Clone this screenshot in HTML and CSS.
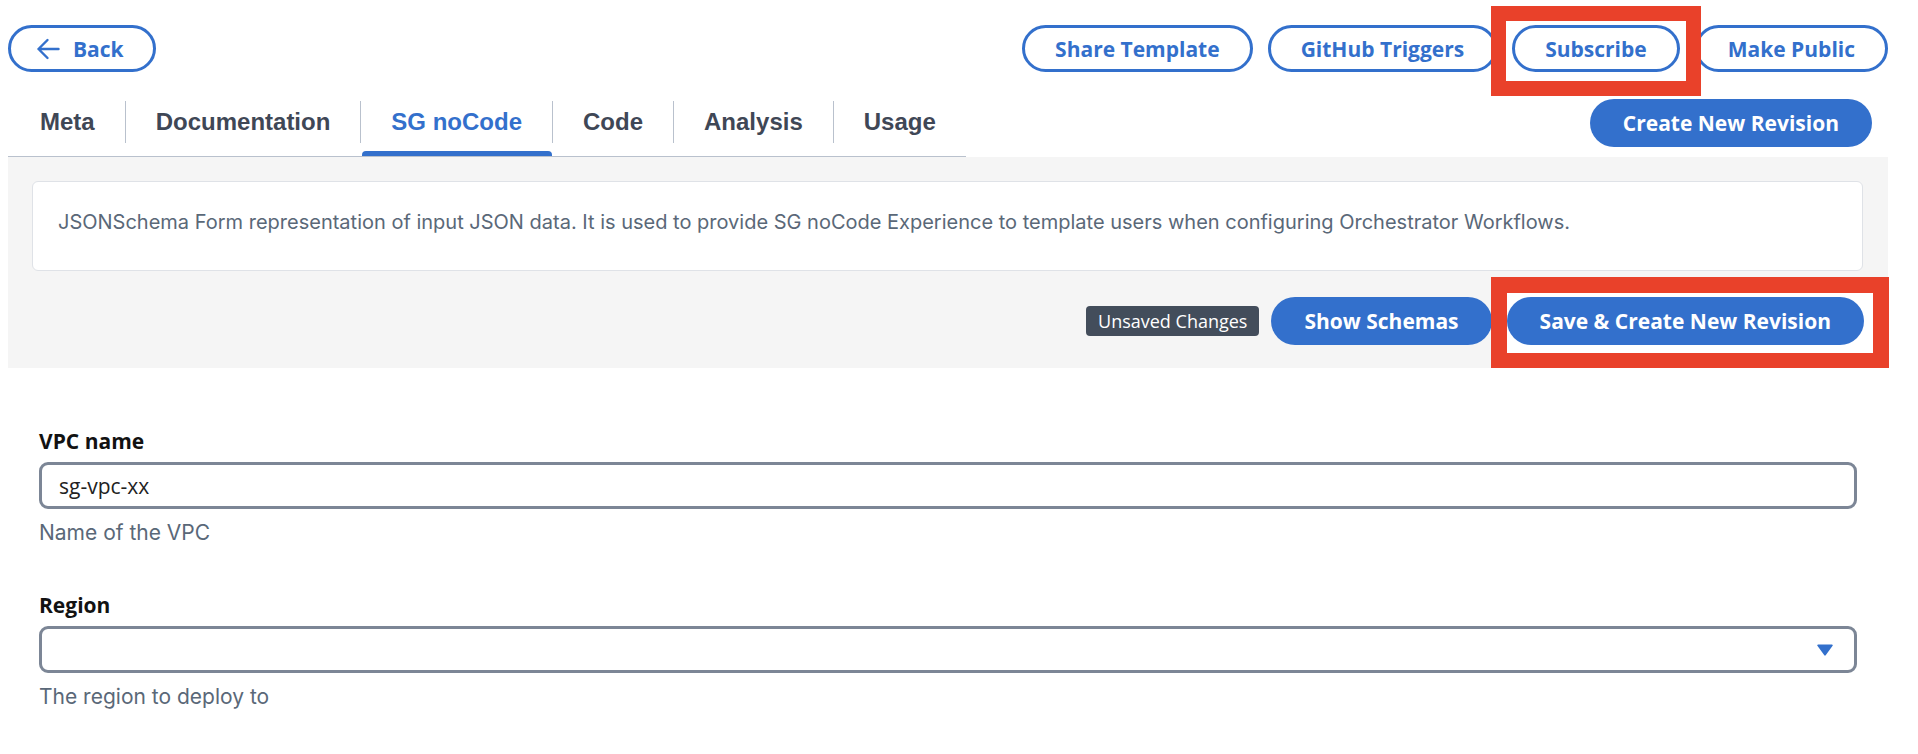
FILE: index.html
```html
<!DOCTYPE html>
<html lang="en">
<head>
<meta charset="utf-8">
<title>SG noCode</title>
<link rel="stylesheet" href="styles.css">
</head>
<body>
<div class="page">
  <header class="toprow">
    <button class="btn outline back" type="button">
      <svg class="arrow" width="24" height="22" viewBox="0 0 24 22" aria-hidden="true">
        <path d="M22.5 11H2.5M11.5 2L2.5 11L11.5 20" fill="none" stroke="currentColor" stroke-width="2.4" stroke-linecap="round" stroke-linejoin="round"/>
      </svg>
      <span>Back</span>
    </button>
    <div class="toolbar">
      <button class="btn outline" type="button">Share Template</button>
      <button class="btn outline" type="button">GitHub Triggers</button>
      <span class="hl hl-sub"><button class="btn outline" type="button">Subscribe</button></span>
      <button class="btn outline" type="button">Make Public</button>
    </div>
  </header>

  <div class="tabrow">
    <nav class="tabs">
      <a class="tab first">Meta</a>
      <span class="sep"></span>
      <a class="tab">Documentation</a>
      <span class="sep"></span>
      <a class="tab active">SG noCode</a>
      <span class="sep"></span>
      <a class="tab">Code</a>
      <span class="sep"></span>
      <a class="tab">Analysis</a>
      <span class="sep"></span>
      <a class="tab">Usage</a>
    </nav>
    <button class="btn filled revision" type="button">Create New Revision</button>
  </div>

  <section class="panel">
    <div class="card">
      <p>JSONSchema Form representation of input JSON data. It is used to provide SG noCode Experience to template users when configuring Orchestrator Workflows.</p>
    </div>
    <div class="actions">
      <span class="badge">Unsaved Changes</span>
      <button class="btn filled" type="button">Show Schemas</button>
      <span class="hl hl-save"><button class="btn filled" type="button">Save &amp; Create New Revision</button></span>
    </div>
  </section>

  <form class="form">
    <div class="field">
      <label class="label" for="vpc">VPC name</label>
      <input class="input" id="vpc" type="text" value="sg-vpc-xx">
      <div class="help">Name of the VPC</div>
    </div>
    <div class="field">
      <label class="label">Region</label>
      <div class="input select">
        <svg class="caret" width="16" height="12" viewBox="0 0 16 12" aria-hidden="true">
          <path d="M1 0.5H15a0.8 0.8 0 0 1 0.6 1.3L8.7 11.2a0.9 0.9 0 0 1-1.4 0L0.4 1.8A0.8 0.8 0 0 1 1 0.5Z" fill="#3370cc"/>
        </svg>
      </div>
      <div class="help">The region to deploy to</div>
    </div>
  </form>
</div>
</body>
</html>
```

FILE: styles.css
```css
* { box-sizing: border-box; }

html, body {
  margin: 0;
  background: #ffffff;
}

body {
  font-family: "Open Sans", "Liberation Sans", sans-serif;
}

.page {
  width: 1880px;
  margin-left: 8px;
  padding-top: 25px;
}

/* buttons */
.btn {
  display: inline-flex;
  align-items: center;
  justify-content: center;
  font-family: "Open Sans", sans-serif;
  font-weight: 700;
  font-size: 21px;
  white-space: nowrap;
  border-radius: 24px;
  cursor: pointer;
  margin: 0;
}

.outline {
  height: 47px;
  padding: 0 30px;
  background: #ffffff;
  color: #3370cc;
  border: 3px solid #3370cc;
}

.filled {
  height: 48px;
  padding: 0 33px;
  background: #3370cc;
  color: #ffffff;
  border: none;
}

.back {
  padding: 0 29px 0 25px;
  gap: 13px;
}

.arrow {
  display: block;
}

.toprow {
  display: flex;
  justify-content: space-between;
  align-items: center;
}

.toolbar {
  display: flex;
  align-items: center;
  gap: 15px;
}

/* highlight annotation boxes */
.hl {
  position: relative;
  display: inline-flex;
}

.hl::before {
  content: "";
  position: absolute;
  background: #ffffff;
  border-style: solid;
  border-color: #e9412a;
  z-index: 0;
}

.hl .btn {
  position: relative;
  z-index: 1;
}

.hl-sub::before {
  top: -19px;
  right: -21px;
  bottom: -24px;
  left: -21px;
  border-width: 15px;
}

.hl-save {
  margin-left: 3px;
}

.hl-save::before {
  top: -20px;
  right: -25px;
  bottom: -23px;
  left: -16px;
  border-width: 16px 16px 15px 16px;
}

/* tabs */
.tabrow {
  display: flex;
  justify-content: space-between;
  align-items: flex-start;
}

.tabs {
  display: flex;
  align-items: flex-start;
  height: 85px;
  border-bottom: 1px solid #b9c1cd;
}

.tab {
  position: relative;
  padding: 36px 30px 20px;
  font-family: "Liberation Sans", Arial, sans-serif;
  font-weight: 700;
  font-size: 24px;
  line-height: 28px;
  color: #3f4756;
  white-space: nowrap;
  height: 84px;
}

.tab.first {
  padding-left: 32px;
}

.tab.active {
  color: #3370cc;
}

.tab.active::after {
  content: "";
  position: absolute;
  left: 1px;
  right: 0;
  bottom: 0;
  height: 5px;
  background: #3370cc;
  border-radius: 4px 4px 0 0;
}

.sep {
  flex-shrink: 0;
  width: 1px;
  height: 42px;
  margin-top: 29px;
  background: #b9c1cd;
}

.revision {
  margin-top: 27px;
  margin-right: 16px;
}

/* panel */
.panel {
  background: #f5f5f5;
  padding: 24px 24px 23px;
}

.card {
  background: #ffffff;
  border: 1px solid #dfe2e7;
  border-radius: 6px;
  padding: 26px 25px 34px;
  margin-right: 1px;
}

.card p {
  margin: 0;
  font-family: Inter, "Liberation Sans", sans-serif;
  font-size: 20px;
  line-height: 28px;
  color: #5a6878;
}

.actions {
  display: flex;
  justify-content: flex-end;
  align-items: center;
  gap: 12px;
  margin-top: 26px;
}

.badge {
  display: inline-block;
  height: 30px;
  line-height: 30px;
  padding: 0 12px;
  background: #434d5b;
  color: #ffffff;
  border-radius: 4px;
  font-family: "Open Sans", sans-serif;
  font-size: 18px;
  white-space: nowrap;
}

/* form */
.form {
  padding: 59px 31px 0;
}

.field + .field {
  margin-top: 46px;
}

.label {
  display: block;
  font-family: "Open Sans", sans-serif;
  font-weight: 700;
  font-size: 21px;
  line-height: 28px;
  color: #121212;
  margin-bottom: 7px;
}

.input {
  display: block;
  width: 100%;
  height: 47px;
  border: 3px solid #7c8696;
  border-radius: 9px;
  padding: 0 17px;
  font-family: "Open Sans", sans-serif;
  font-size: 21px;
  color: #222222;
  background: #ffffff;
  outline: none;
}

.select {
  display: flex;
  align-items: center;
  justify-content: flex-end;
  padding-right: 21px;
}

.caret {
  display: block;
}

.help {
  margin-top: 12px;
  font-family: Inter, "Liberation Sans", sans-serif;
  font-size: 21px;
  line-height: 24px;
  color: #5a6878;
}
```
